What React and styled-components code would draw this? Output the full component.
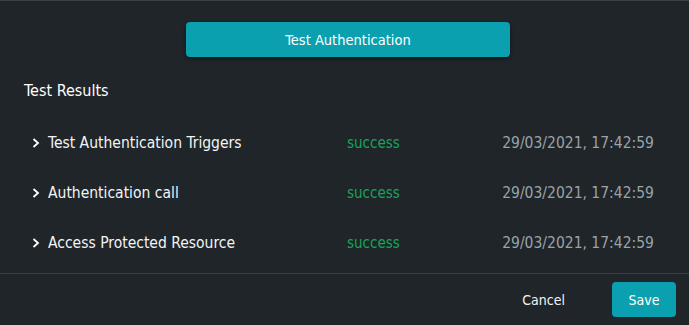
import styled, { createGlobalStyle } from "styled-components";

const GlobalStyle = createGlobalStyle`
    body {
        margin: 0;
        background: #1f2529;
        font-family: "DejaVu Sans Condensed", "DejaVu Sans", sans-serif;
    };
`;

const Panel = styled.div `
    width: 689px;
    height: 325px;
    box-sizing: border-box;
    border-top: 1px solid #3a4045;
    padding-top: 1px;
    display: flex;
    flex-direction: column;
    background: #1f2529;
`;

const Body = styled.div `
    flex: 1;
    padding: 20px 24px 0 24px;
    display: flex;
    flex-direction: column;
`;

const TestButton = styled.button `
    align-self: center;
    width: 324px;
    height: 35px;
    margin-left: 7px;
    border: none;
    border-radius: 4px;
    background: #0aa0b0;
    color: #ffffff;
    font-family: inherit;
    font-size: 14.5px;
    box-shadow: 0 2px 4px rgba(0, 0, 0, 0.35);
`;

const Title = styled.div `
    margin-top: 24px;
    color: #ffffff;
    font-size: 16px;
    line-height: 20px;
`;

const List = styled.div `
    margin-top: 17px;
    display: flex;
    flex-direction: column;
`;

const Row = styled.div `
    display: flex;
    align-items: center;
    height: 50px;
    padding-left: 8px;
    font-size: 15.5px;
`;

const Chevron = styled.svg `
    width: 8px;
    height: 10px;
    margin-right: 8px;
`;

const Name = styled.div `
    width: 299px;
    color: #f2f4f5;
`;

const Status = styled.div `
    width: 120px;
    font-size: 15px;
    color: ${p => p.ok ? "#1aa35b" : "#d9534f"};
`;

const Time = styled.div `
    width: 187px;
    text-align: right;
    color: #9aa3a9;
`;

const Footer = styled.div `
    height: 51px;
    border-top: 1px solid #3a4045;
    display: flex;
    justify-content: flex-end;
    align-items: center;
    padding-right: 13px;
    gap: 47px;
`;

const TextButton = styled.button `
    border: none;
    background: none;
    color: #f2f4f5;
    font-family: inherit;
    font-size: 14px;
    padding: 0;
`;

const SaveButton = styled.button `
    width: 64px;
    height: 35px;
    border: none;
    border-radius: 4px;
    background: #0aa0b0;
    color: #ffffff;
    font-family: inherit;
    font-size: 14px;
`;

const results = [
    {name: "Test Authentication Triggers", ok: true, time: "29/03/2021, 17:42:59"},
    {name: "Authentication call", ok: true, time: "29/03/2021, 17:42:59"},
    {name: "Access Protected Resource", ok: true, time: "29/03/2021, 17:42:59"},
];

const App = () => {
    return (
        <>
            <GlobalStyle/>
            <Panel>
                <Body>
                    <TestButton>Test Authentication</TestButton>
                    <Title>Test Results</Title>
                    <List>
                        {results.map((r) => (
                            <Row key={r.name}>
                                <Chevron viewBox="0 0 8 10">
                                    <path d="M1.5 1 L6 5 L1.5 9" fill="none" stroke="#ffffff" strokeWidth="1.8"/>
                                </Chevron>
                                <Name>{r.name}</Name>
                                <Status ok={r.ok}>{r.ok ? "success" : "failed"}</Status>
                                <Time>{r.time}</Time>
                            </Row>
                        ))}
                    </List>
                </Body>
                <Footer>
                    <TextButton>Cancel</TextButton>
                    <SaveButton>Save</SaveButton>
                </Footer>
            </Panel>
        </>
    );
};

export default App;
